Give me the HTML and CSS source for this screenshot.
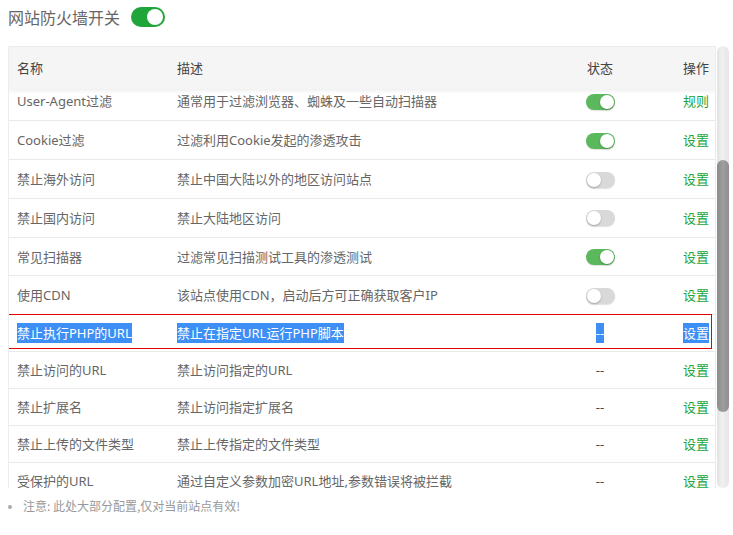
FILE: index.html
```html
<!DOCTYPE html>
<html lang="zh-CN">
<head>
<meta charset="utf-8">
<title>网站防火墙</title>
<link rel="stylesheet" href="styles.css">
</head>
<body>
<div class="page">
  <div class="title-row">
    <span class="title">网站防火墙开关</span>
    <span class="bigswitch"><span class="knob"></span></span>
  </div>

  <div class="scroll-area">
    <div class="panel">
      <table class="head">
        <colgroup><col class="c1"><col class="c2"><col class="c3"><col class="c4"></colgroup>
        <tr><th>名称</th><th>描述</th><th class="mid">状态</th><th class="right">操作</th></tr>
      </table>
      <div class="body-clip">
        <table class="rows">
          <colgroup><col class="c1"><col class="c2"><col class="c3"><col class="c4"></colgroup>
          <tr class="sw"><td>User-Agent过滤</td><td>通常用于过滤浏览器、蜘蛛及一些自动扫描器</td><td class="mid"><span class="sm on"><i></i></span></td><td class="right"><a>规则</a></td></tr>
          <tr class="sw"><td>Cookie过滤</td><td>过滤利用Cookie发起的渗透攻击</td><td class="mid"><span class="sm on"><i></i></span></td><td class="right"><a>设置</a></td></tr>
          <tr class="sw"><td>禁止海外访问</td><td>禁止中国大陆以外的地区访问站点</td><td class="mid"><span class="sm"><i></i></span></td><td class="right"><a>设置</a></td></tr>
          <tr class="sw"><td>禁止国内访问</td><td>禁止大陆地区访问</td><td class="mid"><span class="sm"><i></i></span></td><td class="right"><a>设置</a></td></tr>
          <tr class="sw"><td>常见扫描器</td><td>过滤常见扫描测试工具的渗透测试</td><td class="mid"><span class="sm on"><i></i></span></td><td class="right"><a>设置</a></td></tr>
          <tr class="sw"><td>使用CDN</td><td>该站点使用CDN，启动后方可正确获取客户IP</td><td class="mid"><span class="sm"><i></i></span></td><td class="right"><a>设置</a></td></tr>
          <tr class="txt sel"><td><span class="hl">禁止执行PHP的URL</span></td><td><span class="hl">禁止在指定URL运行PHP脚本</span></td><td class="mid"><span class="hl">--</span></td><td class="right"><span class="hl">设置</span></td></tr>
          <tr class="txt"><td>禁止访问的URL</td><td>禁止访问指定的URL</td><td class="mid dash">--</td><td class="right"><a>设置</a></td></tr>
          <tr class="txt"><td>禁止扩展名</td><td>禁止访问指定扩展名</td><td class="mid dash">--</td><td class="right"><a>设置</a></td></tr>
          <tr class="txt"><td>禁止上传的文件类型</td><td>禁止上传指定的文件类型</td><td class="mid dash">--</td><td class="right"><a>设置</a></td></tr>
          <tr class="txt"><td>受保护的URL</td><td>通过自定义参数加密URL地址,参数错误将被拦截</td><td class="mid dash">--</td><td class="right"><a>设置</a></td></tr>
        </table>
      </div>
      <div class="mark"></div>
    </div>
    <div class="scrollbar"><div class="thumb"></div></div>
  </div>

  <ul class="notes">
    <li>注意: 此处大部分配置,仅对当前站点有效!</li>
  </ul>
</div>
</body>
</html>
```

FILE: styles.css
```css
html, body {
  margin: 0;
  padding: 0;
  background: #fff;
}
body {
  font-family: "Noto Sans", "Noto Sans CJK SC", sans-serif;
  color: #666;
  font-size: 13px;
}
.page {
  padding: 0 4px 0 8px;
  width: 721px;
}
.title-row {
  display: flex;
  align-items: center;
  height: 34px;
  gap: 11px;
  margin-bottom: 12px;
}
.title {
  font-family: "Noto Sans CJK SC", sans-serif;
  font-size: 16px;
  line-height: 20px;
  color: #666;
  margin-top: -1px;
}
.bigswitch {
  position: relative;
  display: inline-block;
  width: 34px;
  height: 20px;
  border-radius: 10px;
  background: #20a53a;
  margin-top: -1px;
}
.bigswitch .knob {
  position: absolute;
  right: 2px;
  top: 2px;
  width: 16px;
  height: 16px;
  border-radius: 50%;
  background: #fff;
}
.scroll-area {
  display: flex;
  height: 442px;
}
.panel {
  position: relative;
  width: 709px;
  box-sizing: border-box;
  border: 1px solid #ececec;
  border-bottom: none;
  display: flex;
  flex-direction: column;
  overflow: hidden;
}
table {
  border-collapse: collapse;
  table-layout: fixed;
  width: 707px;
}
col.c1 { width: 160px; }
col.c2 { width: 392px; }
col.c3 { width: 78px; }
col.c4 { width: 77px; }
.head {
  position: relative;
  z-index: 2;
  background: #f5f5f5;
  box-shadow: 0 2px 4px rgba(0, 0, 0, 0.07);
}
th {
  height: 42px;
  padding: 0 0 0 8px;
  text-align: left;
  font-weight: normal;
  color: #444;
  line-height: 20px;
  font-size: 13px;
}
td {
  padding: 0 0 0 8px;
  line-height: 20px;
  border-bottom: 1px solid #e9e9e9;
  white-space: nowrap;
  overflow: hidden;
}
th.mid, td.mid {
  text-align: center;
  padding: 0 0 0 0;
}
th.right, td.right {
  text-align: right;
  padding: 0 7px 0 0;
}
td.dash {
  color: #444;
}
.body-clip {
  flex: 1;
  overflow: hidden;
}
.rows {
  margin-top: -6.5px;
}
tr.sw td { height: 37.8px; }
tr.txt td { height: 36px; }
td a {
  color: #20a53a;
  text-decoration: none;
}
.sm {
  position: relative;
  display: inline-block;
  vertical-align: middle;
  width: 29px;
  height: 16px;
  border-radius: 8px;
  background: #d9d9d9;
  box-shadow: 0 1px 1px rgba(0, 0, 0, 0.12);
  margin-top: -2px;
}
.sm i {
  position: absolute;
  top: 1px;
  left: 1px;
  width: 14px;
  height: 14px;
  border-radius: 50%;
  background: #fff;
  box-shadow: 0 1px 2px rgba(0, 0, 0, 0.25);
}
.sm.on {
  background: #5cb85c;
}
.sm.on i {
  left: 14px;
}
.hl {
  background: #3d8ef5;
  color: #fff;
  display: inline-block;
  line-height: 20px;
}
.mark {
  position: absolute;
  z-index: 3;
  left: -2px;
  top: 267px;
  width: 705px;
  height: 35px;
  border: 1px solid #e60000;
  box-sizing: border-box;
}
.scrollbar {
  width: 12px;
  margin-left: 1px;
  border-radius: 6px;
  background: linear-gradient(to right, #e2e2e2, #f0f0f0 40%, #e6e6e6);
  display: flex;
  flex-direction: column;
  padding-top: 114px;
  box-sizing: border-box;
}
.thumb {
  height: 252px;
  border-radius: 6px;
  background: linear-gradient(to right, #8c8c8c, #9e9e9e 50%, #8f8f8f);
}
.notes {
  margin: 10px 0 0 0;
  padding: 0 0 0 15px;
  color: #999;
  font-size: 12px;
  line-height: 16px;
  font-family: "Noto Sans CJK SC", sans-serif;
}
.notes li::marker {
  color: #aaa;
  font-size: 11px;
}
```
